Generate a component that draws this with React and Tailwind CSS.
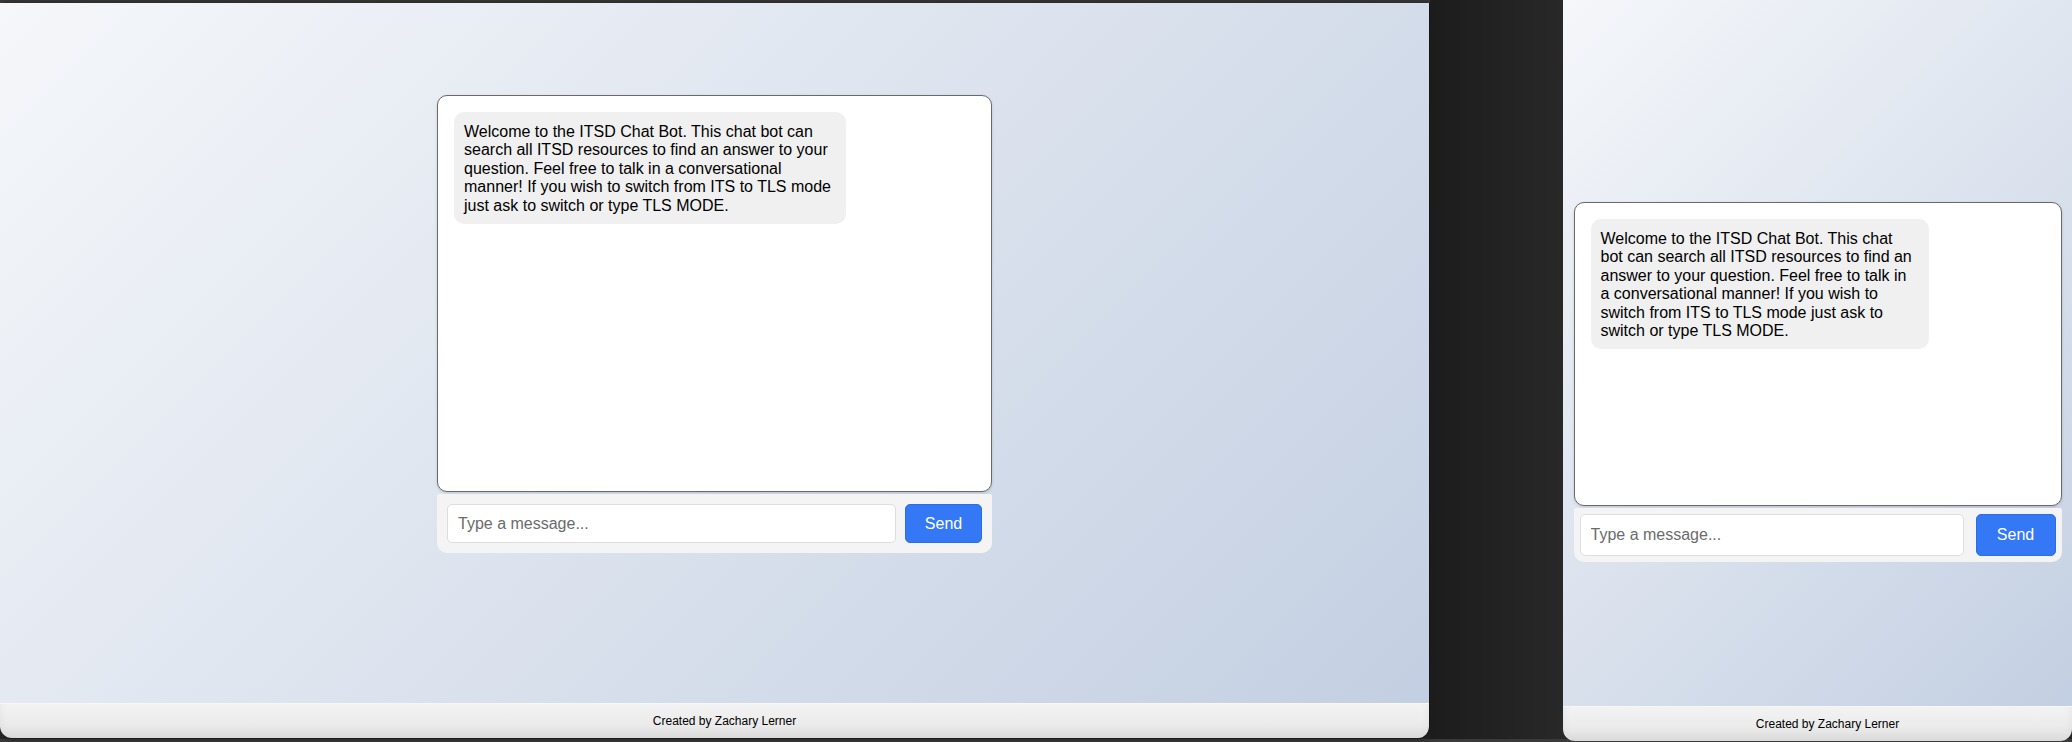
import React from 'react';

const WELCOME =
  'Welcome to the ITSD Chat Bot. This chat bot can search all ITSD resources to find an answer to your question. Feel free to talk in a conversational manner! If you wish to switch from ITS to TLS mode just ask to switch or type TLS MODE.';

// One copy of the chat page, as seen in a browser window.
// Sizes differ per window, so each gets its own full class names.
const ChatWindow = ({ frame, column, box, bubble, bar, field, button }) => {
  return (
    <div className={`flex flex-col overflow-hidden rounded-b-[12px] shrink-0 ${frame}`}>
      {/* Main area */}
      <div className="flex-1 bg-[linear-gradient(135deg,#f5f7fa_0%,#c3cfe2_100%)]">
        <div className={`mx-auto flex flex-col ${column}`}>
          {/* Messages */}
          <div className={`bg-white border-[1.5px] border-[#6a6a6a] rounded-[10px] p-4 shadow-[0_1px_3px_rgba(0,0,0,0.15)] ${box}`}>
            <div className={`bg-[#f0f0f0] rounded-[10px] px-[10px] pt-[11px] pb-[9px] text-[16px] leading-[18.4px] text-black ${bubble}`}>
              {WELCOME}
            </div>
          </div>

          {/* Input bar */}
          <div className={`mt-[2px] flex items-center bg-[#f4f4f4] rounded-b-[10px] rounded-t-[2px] ${bar}`}>
            <input
              type="text"
              placeholder="Type a message..."
              className={`flex-1 min-w-0 bg-white border border-[#dedede] rounded-[5px] px-[10px] text-[16px] text-black placeholder:text-[#6b6b6b] outline-none ${field}`}
            />
            <button
              className={`bg-[#3478f6] border border-[#2b6de6] rounded-[5px] text-white text-[16px] font-medium ${button}`}
            >
              Send
            </button>
          </div>
        </div>
      </div>

      {/* Footer */}
      <div className="h-[35px] shrink-0 flex items-center justify-center pl-[20px] border-t border-[#f7f7f7] bg-[linear-gradient(to_bottom,#f3f3f3,#e6e6e6)] shadow-[inset_0_-6px_10px_rgba(0,0,0,0.06)] text-[12px] text-black">
        Created by Zachary Lerner
      </div>
    </div>
  );
};

export default function App() {
  return (
    <div className="w-[2072px] h-[742px] overflow-hidden flex items-start font-['Liberation_Sans',Arial,sans-serif] bg-[linear-gradient(to_bottom,#262626_739px,#3a3a3a_739px)]">
      {/* Left window */}
      <div className="flex flex-col shrink-0">
        <div className="h-[3px] w-[1430px] bg-[#3c3c3c]" />
        <ChatWindow
          frame="w-[1430px] h-[735px] border-r border-[#151515] shadow-[2px_0_8px_rgba(0,0,0,0.5)]"
          column="w-[555px] pt-[92px]"
          box="h-[397px]"
          bubble="max-w-[392px]"
          bar="p-[10px] gap-[9px]"
          field="h-[39px]"
          button="h-[39px] w-[77px]"
        />
      </div>

      <div className="w-[133px] shrink-0 h-[739px] bg-[linear-gradient(to_right,#1c1c1c,#282828)]" />

      {/* Right window */}
      <ChatWindow
        frame="w-[509px] h-[741px]"
        column="w-[488px] pt-[202px]"
        box="h-[304px]"
        bubble="max-w-[338px]"
        bar="p-[6px] gap-[12px]"
        field="h-[42px]"
        button="h-[42px] w-[80px]"
      />
    </div>
  );
}
